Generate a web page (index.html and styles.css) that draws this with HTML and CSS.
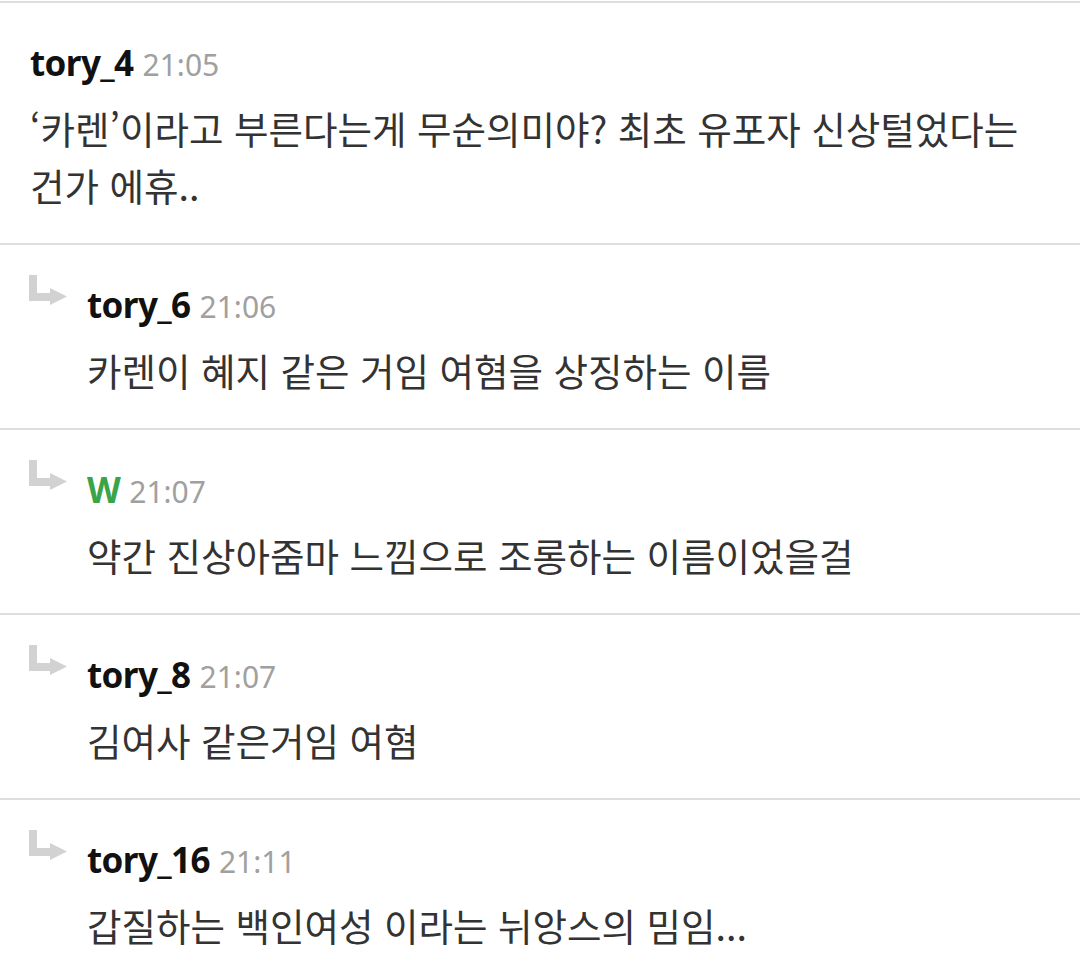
FILE: index.html
```html
<!DOCTYPE html>
<html lang="ko">
<head>
<meta charset="utf-8">
<link rel="stylesheet" href="styles.css">
</head>
<body>
<ul class="comments">
  <li class="comment">
    <div class="main">
      <div class="meta"><span class="name">tory_4</span><span class="time">21:05</span></div>
      <div class="body">‘카렌’이라고 부른다는게 무순의미야? 최초 유포자 신상털었다는 건가 에휴..</div>
    </div>
  </li>
  <li class="comment reply">
    <svg class="arrow" viewBox="0 0 38 30" width="38" height="30"><path d="M0 0H8V18H21V13L38 21.5L21 30V26H0Z"/></svg>
    <div class="main">
      <div class="meta"><span class="name">tory_6</span><span class="time">21:06</span></div>
      <div class="body">카렌이 혜지 같은 거임 여혐을 상징하는 이름</div>
    </div>
  </li>
  <li class="comment reply">
    <svg class="arrow" viewBox="0 0 38 30" width="38" height="30"><path d="M0 0H8V18H21V13L38 21.5L21 30V26H0Z"/></svg>
    <div class="main">
      <div class="meta"><span class="name writer">W</span><span class="time">21:07</span></div>
      <div class="body">약간 진상아줌마 느낌으로 조롱하는 이름이었을걸</div>
    </div>
  </li>
  <li class="comment reply">
    <svg class="arrow" viewBox="0 0 38 30" width="38" height="30"><path d="M0 0H8V18H21V13L38 21.5L21 30V26H0Z"/></svg>
    <div class="main">
      <div class="meta"><span class="name">tory_8</span><span class="time">21:07</span></div>
      <div class="body">김여사 같은거임 여혐</div>
    </div>
  </li>
  <li class="comment reply">
    <svg class="arrow" viewBox="0 0 38 30" width="38" height="30"><path d="M0 0H8V18H21V13L38 21.5L21 30V26H0Z"/></svg>
    <div class="main">
      <div class="meta"><span class="name">tory_16</span><span class="time">21:11</span></div>
      <div class="body">갑질하는 백인여성 이라는 뉘앙스의 밈임...</div>
    </div>
  </li>
</ul>
</body>
</html>
```

FILE: styles.css
```css
html, body {
  margin: 0;
  padding: 0;
  background: #fff;
}
body {
  font-family: "Noto Sans", "Noto Sans CJK KR", sans-serif;
  color: #333;
}
.comments {
  list-style: none;
  margin: 0;
  padding: 1px 0 0;
}
.comment {
  display: flex;
  align-items: flex-start;
  gap: 20px;
  border-top: 2px solid #dedede;
  padding: 38px 30px 30px 30px;
}
.main {
  flex: 1;
  min-width: 0;
}
.meta {
  height: 44px;
  line-height: 44px;
  margin-bottom: 14px;
  white-space: nowrap;
}
.name {
  font-size: 35px;
  font-weight: 700;
  color: #111;
  letter-spacing: -0.6px;
}
.name.writer {
  color: #3aa44a;
}
.time {
  font-size: 30px;
  color: #a0a0a0;
  margin-left: 9px;
}
.body {
  font-family: "Noto Sans CJK KR", sans-serif;
  font-size: 37.5px;
  line-height: 57px;
  color: #333;
}
.arrow {
  flex: none;
  display: block;
  margin: -8px 0 0 -1px;
  fill: #d2d2d2;
}
```
